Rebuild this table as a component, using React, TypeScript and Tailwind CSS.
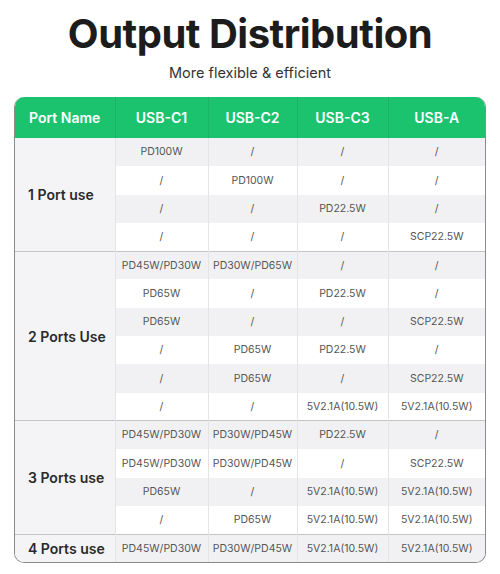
const GROUPS = [
  {
    label: "1 Port use",
    rows: [
      ["PD100W", "/", "/", "/"],
      ["/", "PD100W", "/", "/"],
      ["/", "/", "PD22.5W", "/"],
      ["/", "/", "/", "SCP22.5W"],
    ],
  },
  {
    label: "2 Ports Use",
    rows: [
      ["PD45W/PD30W", "PD30W/PD65W", "/", "/"],
      ["PD65W", "/", "PD22.5W", "/"],
      ["PD65W", "/", "/", "SCP22.5W"],
      ["/", "PD65W", "PD22.5W", "/"],
      ["/", "PD65W", "/", "SCP22.5W"],
      ["/", "/", "5V2.1A(10.5W)", "5V2.1A(10.5W)"],
    ],
  },
  {
    label: "3 Ports use",
    rows: [
      ["PD45W/PD30W", "PD30W/PD45W", "PD22.5W", "/"],
      ["PD45W/PD30W", "PD30W/PD45W", "/", "SCP22.5W"],
      ["PD65W", "/", "5V2.1A(10.5W)", "5V2.1A(10.5W)"],
      ["/", "PD65W", "5V2.1A(10.5W)", "5V2.1A(10.5W)"],
    ],
  },
  {
    label: "4 Ports use",
    rows: [["PD45W/PD30W", "PD30W/PD45W", "5V2.1A(10.5W)", "5V2.1A(10.5W)"]],
  },
]

const HEADERS = ["Port Name", "USB-C1", "USB-C2", "USB-C3", "USB-A"]

export default function App() {
  return (
    <div className="w-[500px] h-[574px] bg-white font-['Inter',sans-serif] pt-[9px]">
      {/* Title */}
      <h1 className="text-center text-[40px] font-bold leading-[50px] tracking-[-0.5px] text-[#1c1c1c]">
        Output Distribution
      </h1>
      <p className="mt-[5px] text-center text-[14.5px] leading-[18px] text-[#333]">
        More flexible &amp; efficient
      </p>

      {/* Table */}
      <div className="mx-[14px] mt-[15px] w-[472px] overflow-hidden rounded-[10px] border border-[#8a8a8a] border-t-0">
        <table className="w-full border-collapse table-fixed">
          <colgroup>
            <col className="w-[100px]" />
            <col className="w-[93px]" />
            <col className="w-[89px]" />
            <col className="w-[91px]" />
            <col />
          </colgroup>
          <thead>
            <tr className="h-[41px] bg-[#1cc36f]">
              {HEADERS.map((h, i) => (
                <th
                  key={h}
                  className={`text-[14px] font-semibold text-white ${i > 0 ? "border-l border-[#19b566]" : ""}`}
                >
                  {h}
                </th>
              ))}
            </tr>
          </thead>
          <tbody>
            {GROUPS.map((g, gi) =>
              g.rows.map((row, ri) => (
                <tr
                  key={`${gi}-${ri}`}
                  className={`h-[28.3px] ${ri % 2 === 0 ? "bg-[#f1f1f3]" : "bg-white"} ${
                    ri === 0 && gi > 0 ? "border-t border-[#c4c4c4]" : ""
                  }`}
                >
                  {ri === 0 && (
                    <td
                      rowSpan={g.rows.length}
                      className="bg-[#f4f4f6] pl-[13px] text-[14px] font-semibold text-[#2a2a2a]"
                    >
                      {g.label}
                    </td>
                  )}
                  {row.map((c, ci) => (
                    <td
                      key={ci}
                      className="border-l border-[#e4e4e4] text-center text-[10.5px] text-[#555]"
                    >
                      {c}
                    </td>
                  ))}
                </tr>
              ))
            )}
          </tbody>
        </table>
      </div>
    </div>
  )
}
